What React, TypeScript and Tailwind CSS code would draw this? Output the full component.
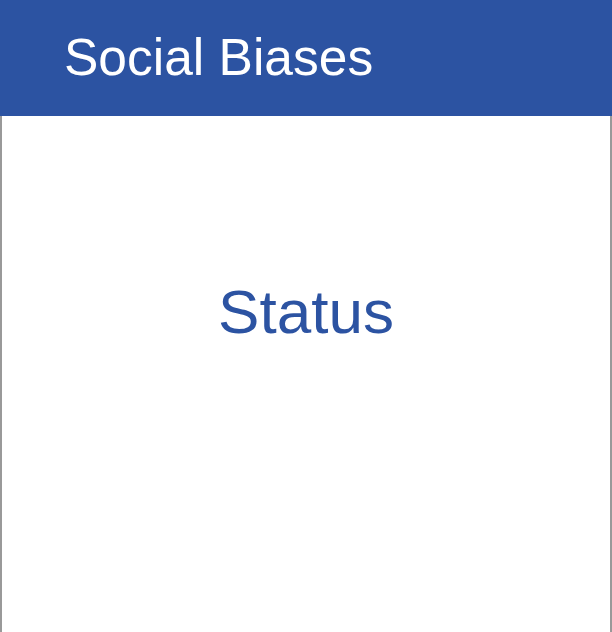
export default function App() {
  return (
    <div className="w-[612px] h-[632px] flex flex-col bg-white font-['Liberation_Sans',Arial,sans-serif]">
      <header className="h-[116px] shrink-0 bg-[#2c53a2] flex items-center pl-[64px]">
        <h1 className="text-white text-[51.5px] leading-none">Social Biases</h1>
      </header>
      <main className="flex-1 border-x-2 border-[#999999] flex flex-col items-center">
        <p className="mt-[165px] text-[#2c53a2] text-[62px] leading-none">Status</p>
      </main>
    </div>
  );
}
